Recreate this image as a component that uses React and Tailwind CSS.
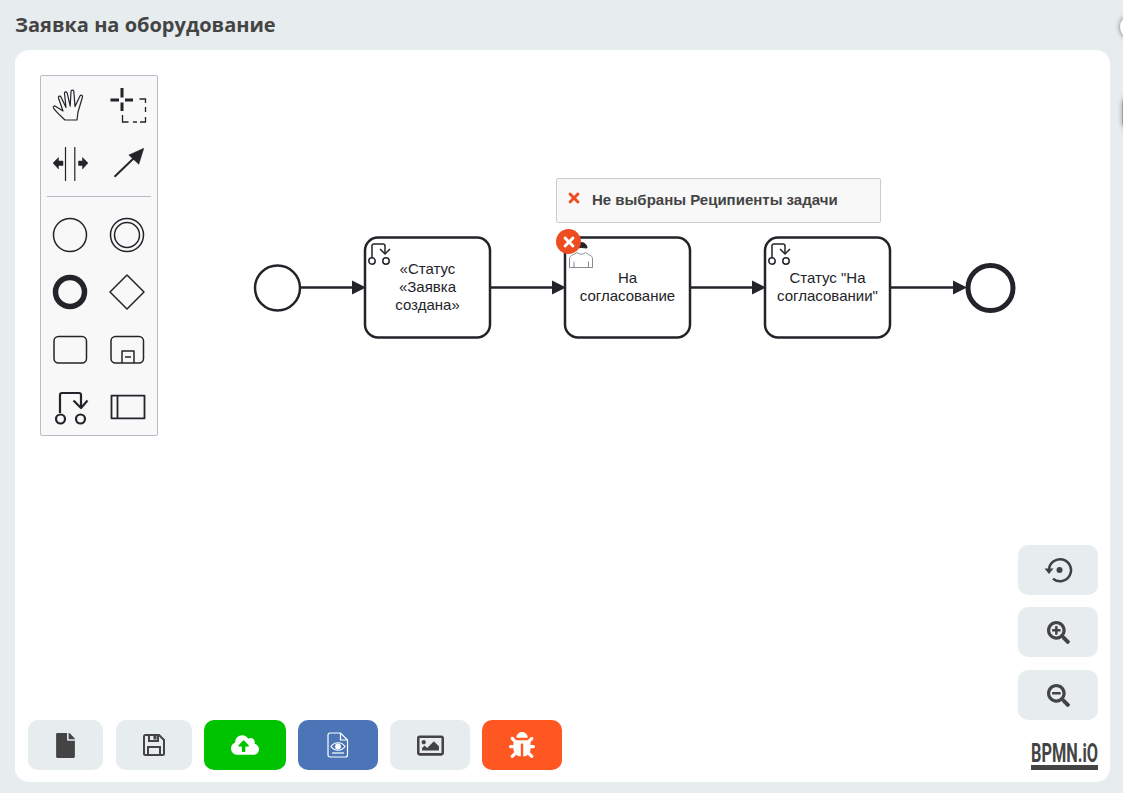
import { FaFile, FaCloudUploadAlt, FaRegImage, FaBug, FaSearchPlus, FaSearchMinus, FaTimes } from 'react-icons/fa'

const TASKS = [
  { x: 365, lines: ['«Статус', '«Заявка', 'создана»'], y: 274 },
  { x: 565, lines: ['На', 'согласование'], y: 283 },
  { x: 765, lines: ['Статус "На', 'согласовании"'], y: 283 },
]

const FLOWS = [
  [301, 352],
  [491, 552],
  [691, 752],
  [891, 953],
]

function ScriptMark({ x, y }) {
  return (
    <g transform={`translate(${x} ${y})`} fill="none" stroke="#22242a" strokeWidth="1.5">
      <path d="M0 15V3a2 2 0 0 1 2-2h9a2 2 0 0 1 2 2v8" />
      <path d="M8 6l5 5 5-5" />
      <circle cx="0" cy="18" r="3.2" />
      <circle cx="14" cy="18" r="3.2" />
    </g>
  )
}

function Diagram() {
  return (
    <svg className="absolute inset-0 w-full h-full" viewBox="15 50 1095 732">
      <circle cx="277.5" cy="288" r="22.5" fill="#fff" stroke="#22242a" strokeWidth="2.5" />
      <circle cx="990.5" cy="288" r="22.5" fill="#fff" stroke="#22242a" strokeWidth="5" />
      {FLOWS.map(([from, to]) => (
        <g key={from}>
          <line x1={from} x2={to} y1="287.5" y2="287.5" stroke="#22242a" strokeWidth="2.5" />
          <path d={`M${to} 280.5L${to + 14} 287.5L${to} 294.5Z`} fill="#22242a" />
        </g>
      ))}
      {TASKS.map((t) => (
        <g key={t.x}>
          <rect x={t.x} y="237.5" width="125" height="100" rx="13" fill="#fff" stroke="#22242a" strokeWidth="2.5" />
          <text x={t.x + 62.5} y={t.y} textAnchor="middle" fontFamily="'Liberation Sans', Arial, sans-serif" fontSize="15" fill="#22242a">
            {t.lines.map((l, i) => (
              <tspan key={l} x={t.x + 62.5} dy={i === 0 ? 0 : 18}>{l}</tspan>
            ))}
          </text>
        </g>
      ))}
      <ScriptMark x={372} y={243} />
      <ScriptMark x={772} y={243} />
      {/* user task marker */}
      <g fill="none">
        <path d="M569.5 267.500v-9c0-3 5-4 7.500-6q4.500 3.500 8.500 0c2.500 2 7 3 7 6v9z" fill="#fff" stroke="#6b6d72" strokeWidth="0.8" />
        <path d="M574 267.500v-6M588.500 267.500v-6" stroke="#6b6d72" strokeWidth="0.8" />
        <path d="M576 248a5.500 5.500 0 0 1 11 0q-5.500-1-11 0z" fill="#22242a" stroke="#22242a" strokeWidth="1" />
      </g>
    </svg>
  )
}

function PaletteIcon({ children }) {
  return (
    <svg width="40" height="40" viewBox="0 0 40 40" fill="none" stroke="#22242a" strokeWidth="1.500" strokeLinejoin="round">
      {children}
    </svg>
  )
}

function Cell({ children }) {
  return <div className="flex items-center justify-center">{children}</div>
}

function Palette() {
  return (
    <div className="relative w-[118px] h-[361px] ml-[25px] mt-[25px] bg-[#f8f8f8] border border-[#b9bcc6] rounded-[2px] flex flex-col">
      <div className="grid grid-cols-[57px_57px] auto-rows-[58px] pt-[1px] shrink-0">
        <Cell>
          <PaletteIcon>
            <path d="M15 34c-3-3-10-9-11.500-12-.8-1.700 1-2.700 2.300-1.400L13 25 8.500 12c-.6-1.900 1.600-2.700 2.500-1l5 10.500-1.500-14c-.3-2 2.200-2.300 2.700-.4l3 13L21 5.500c.2-2 2.700-1.800 2.800 0L25 20.500 30 10c.8-1.700 3-.8 2.500 1L28 26 27 34z" strokeWidth="1.200" />
          </PaletteIcon>
        </Cell>
        <Cell>
          <PaletteIcon>
            <path d="M3.500 14H12M18 14H26M15 2v9.500M15 16.500V25" strokeWidth="3" strokeLinejoin="miter" />
            <path d="M15.500 29v7h6M26 36h4M33 36h5.500v-5M38.500 26v-5M38.500 17v-4h-6" strokeWidth="1.300" strokeLinejoin="miter" />
          </PaletteIcon>
        </Cell>
        <Cell>
          <PaletteIcon>
            <path d="M15.500 3v34M24.800 3v34" strokeWidth="1.200" />
            <path d="M3 19l5.500-5.500V17H13v4.500H8.500v3.500zM38 19l-5.500-5.500V17H28.500v4.500h4v3.500z" fill="#22242a" strokeWidth="0.500" />
          </PaletteIcon>
        </Cell>
        <Cell>
          <PaletteIcon>
            <path d="M7.500 32.700L27 14" strokeWidth="2" />
            <path d="M36.800 4.300L31.800 20.300 21.800 11z" fill="#22242a" strokeWidth="0.500" />
          </PaletteIcon>
        </Cell>
      </div>
      <div className="h-px shrink-0 bg-[#b9bcc6] mx-[6px] mt-[3px]" />
      <div className="grid grid-cols-[57px_57px] auto-rows-[57.500px] pt-[9px] shrink-0">
        <Cell>
          <PaletteIcon><circle cx="20" cy="20" r="16.500" /></PaletteIcon>
        </Cell>
        <Cell>
          <PaletteIcon>
            <circle cx="20" cy="20" r="16.500" />
            <circle cx="20" cy="20" r="12.500" />
          </PaletteIcon>
        </Cell>
        <Cell>
          <PaletteIcon><circle cx="20" cy="20" r="14.500" strokeWidth="5.500" /></PaletteIcon>
        </Cell>
        <Cell>
          <PaletteIcon><path d="M20 3l17 17-17 17L3 20z" /></PaletteIcon>
        </Cell>
        <Cell>
          <PaletteIcon><rect x="4" y="6.500" width="32.500" height="26.500" rx="4.500" /></PaletteIcon>
        </Cell>
        <Cell>
          <PaletteIcon>
            <rect x="4" y="6.500" width="32.500" height="26.500" rx="4.500" />
            <path d="M15 33V21h12v12M18 27h6" />
          </PaletteIcon>
        </Cell>
        <Cell>
          <PaletteIcon>
            <g strokeWidth="2.200">
              <path d="M10 26V8a2 2 0 0 1 2-2h17a2 2 0 0 1 2 2v13" />
              <path d="M23.500 13.500L31 21l6.500-7.500" />
              <circle cx="10.500" cy="32" r="4.500" />
              <circle cx="30.500" cy="32" r="4.500" />
            </g>
          </PaletteIcon>
        </Cell>
        <Cell>
          <PaletteIcon>
            <g strokeWidth="1.800">
              <rect x="4.500" y="8.700" width="33" height="22.600" />
              <path d="M10.500 8.700v22.600" />
            </g>
          </PaletteIcon>
        </Cell>
      </div>
    </div>
  )
}

function ToolButton({ className, children }) {
  return (
    <button className={`h-[50px] rounded-[10px] flex items-center justify-center ${className}`}>
      {children}
    </button>
  )
}

function RestoreIcon() {
  return (
    <svg width="30" height="30" viewBox="0 0 30 30" fill="none" stroke="#3f4246" strokeWidth="2.500">
      <path d="M6 15a11 11 0 1 1 4 8.700" />
      <path d="M1.500 13.500h9L6 19z" fill="#3f4246" stroke="none" />
      <circle cx="16.500" cy="15" r="3" fill="#3f4246" stroke="none" />
    </svg>
  )
}

function SaveIcon() {
  return (
    <svg width="22" height="22" viewBox="0 0 22 22" fill="none" stroke="#444" strokeWidth="2">
      <path d="M2.500 1h13.500l5 5v13.500a1.500 1.500 0 0 1-1.500 1.500h-17a1.500 1.500 0 0 1-1.500-1.500v-17a1.500 1.500 0 0 1 1.500-1.500z" />
      <path d="M6 1v6h9V1" />
      <path d="M10.500 1.500h3v4h-3z" fill="#444" stroke="none" />
      <path d="M5 21v-8h12v8" />
    </svg>
  )
}

function FileEyeIcon() {
  return (
    <svg width="22" height="26" viewBox="0 0 22 26" fill="none" stroke="#fff" strokeWidth="1.200">
      <path d="M3 1h10.500L20.500 8v15a2 2 0 0 1-2 2H3a2 2 0 0 1-2-2V3a2 2 0 0 1 2-2z" />
      <path d="M13.500 1v7h7" />
      <path d="M4 14.500c3.500-5 10.500-5 14 0-3.500 5-10.500 5-14 0z" />
      <circle cx="11" cy="14.500" r="2.300" fill="#fff" />
      <path d="M5 21h12" />
    </svg>
  )
}

function BpmnLogo() {
  return (
    <svg className="mt-[22px] overflow-visible" width="67" height="28" viewBox="0 0 67 28">
      <text x="0" y="20" textLength="67" lengthAdjust="spacingAndGlyphs" fontFamily="Roboto, sans-serif" fontWeight="700" fontSize="26" fill="#444">BPMN.iO</text>
      <rect x="0" y="23" width="67" height="5" fill="#444" />
    </svg>
  )
}

export default function App() {
  return (
    <div className="h-[793px] overflow-hidden bg-[#e7ecef] relative font-['Liberation_Sans',Arial,sans-serif]">
      <div className="h-[50px] pl-[15px] flex items-center">
        <h1 className="text-[20px] font-bold text-[#444] font-['Open_Sans',sans-serif] leading-none">Заявка на оборудование</h1>
      </div>

      <div className="relative w-[1095px] h-[732px] ml-[15px] bg-white rounded-[14px] flex flex-col justify-between">
        <Diagram />

        {/* ошибка валидации */}
        <div className="absolute left-[541px] top-[128px] w-[325px] h-[45px] bg-[#f8f8f8] border border-[#cccccc] rounded-[2px] flex items-center pl-[9px] gap-[10px]">
          <FaTimes className="text-[#ee4d22] text-[16px] mb-[6px] shrink-0" />
          <span className="text-[15px] font-bold text-[#444] whitespace-nowrap">Не выбраны Реципиенты задачи</span>
        </div>
        <div className="absolute left-[541px] top-[179px] w-[25px] h-[25px] rounded-full bg-[#ee4d22] flex items-center justify-center">
          <FaTimes className="text-white text-[16px]" />
        </div>

        <Palette />

        <div className="relative flex items-end justify-between pl-[13px] pr-[12px] pb-[12px]">
          <div className="flex gap-[12px]">
            <ToolButton className="w-[75px] mr-px bg-[#e7ecef]"><FaFile className="text-[#444] text-[25px]" /></ToolButton>
            <ToolButton className="w-[76px] bg-[#e7ecef]"><SaveIcon /></ToolButton>
            <ToolButton className="w-[82px] bg-[#00c300]"><FaCloudUploadAlt className="text-white text-[28px]" /></ToolButton>
            <ToolButton className="w-[80px] bg-[#4c75b8]"><FileEyeIcon /></ToolButton>
            <ToolButton className="w-[80px] bg-[#e7ecef]"><FaRegImage className="text-[#444] text-[27px]" /></ToolButton>
            <ToolButton className="w-[80px] bg-[#ff5722]"><FaBug className="text-white text-[26px]" /></ToolButton>
          </div>
          <div className="flex flex-col items-end">
            <div className="flex flex-col gap-[12px] w-[80px]">
              <ToolButton className="bg-[#e7ecef]"><RestoreIcon /></ToolButton>
              <ToolButton className="bg-[#e7ecef]"><FaSearchPlus className="text-[#444] text-[23px]" /></ToolButton>
              <ToolButton className="mt-px bg-[#e7ecef]"><FaSearchMinus className="text-[#444] text-[23px]" /></ToolButton>
            </div>
            <BpmnLogo />
          </div>
        </div>
      </div>

      {/* край соседней панели */}
      <div className="absolute left-[1120px] top-[15px] w-[24px] h-[24px] rounded-full bg-white shadow-[0_0_5px_rgba(0,0,0,0.5)]" />
      <div className="absolute left-[1122px] top-[93px] w-[24px] h-[40px] rounded-full bg-[#9a9c9e] shadow-[0_0_5px_rgba(0,0,0,0.3)]" />
    </div>
  )
}
